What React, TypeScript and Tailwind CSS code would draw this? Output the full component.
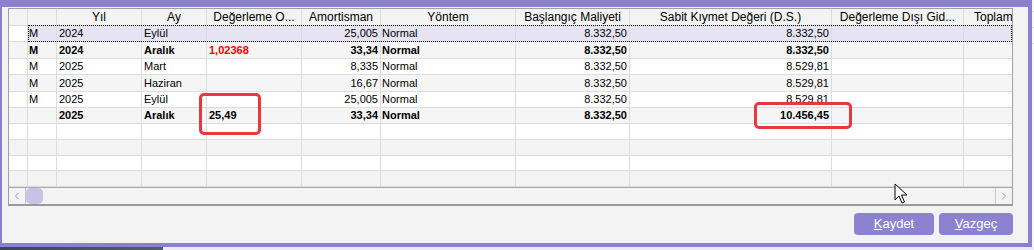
import { ChevronLeft, ChevronRight } from "lucide-react";

type Row = {
    m: string;
    yil: string;
    ay: string;
    deg: string;
    amort: string;
    yontem: string;
    bas: string;
    sabit: string;
    bold?: boolean;
    red?: boolean;
};

// Column widths in px (each includes its 1px right grid line)
const cols = [
    { key: "ind", title: "", w: "w-[19px]" },
    { key: "m", title: "", w: "w-[29px]" },
    { key: "yil", title: "Yıl", w: "w-[85px]" },
    { key: "ay", title: "Ay", w: "w-[65px]" },
    { key: "deg", title: "Değerleme O...", w: "w-[95px]" },
    { key: "amort", title: "Amortisman", w: "w-[79px]" },
    { key: "yontem", title: "Yöntem", w: "w-[135px]" },
    { key: "bas", title: "Başlangıç Maliyeti", w: "w-[114px]" },
    { key: "sabit", title: "Sabit Kıymet Değeri (D.S.)", w: "w-[202px]" },
    { key: "ddg", title: "Değerleme Dışı Gid...", w: "w-[132px]" },
    { key: "top", title: "Toplam", w: "w-[120px]" },
];

const rows: Row[] = [
    { m: "M", yil: "2024", ay: "Eylül", deg: "", amort: "25,005", yontem: "Normal", bas: "8.332,50", sabit: "8.332,50" },
    { m: "M", yil: "2024", ay: "Aralık", deg: "1,02368", amort: "33,34", yontem: "Normal", bas: "8.332,50", sabit: "8.332,50", bold: true, red: true },
    { m: "M", yil: "2025", ay: "Mart", deg: "", amort: "8,335", yontem: "Normal", bas: "8.332,50", sabit: "8.529,81" },
    { m: "M", yil: "2025", ay: "Haziran", deg: "", amort: "16,67", yontem: "Normal", bas: "8.332,50", sabit: "8.529,81" },
    { m: "M", yil: "2025", ay: "Eylül", deg: "", amort: "25,005", yontem: "Normal", bas: "8.332,50", sabit: "8.529,81" },
    { m: "", yil: "2025", ay: "Aralık", deg: "25,49", amort: "33,34", yontem: "Normal", bas: "8.332,50", sabit: "10.456,45", bold: true },
];

// row heights so grid lines land where the screenshot has them
const rowHeights = ["h-[16px]", "h-[17px]", "h-[16px]", "h-[17px]", "h-[16px]", "h-[16px]"];

const cell = "h-full shrink-0 border-r border-[#dcdcdc] flex items-center overflow-hidden whitespace-nowrap";

function DataRow({ row, index }: { row: Row; index: number }) {
    const selected = index === 0;
    const bg = selected ? "bg-[#e6e4f3]" : index % 2 === 1 ? "bg-[#f5f5f5]" : "bg-white";
    const weight = row.bold ? "font-bold" : "";
    return (
        <div className={`relative flex ${rowHeights[index]} border-b border-[#dcdcdc]`}>
            <div className={`${cell} w-[19px] ${selected ? "bg-white" : bg}`}></div>
            <div className={`${cell} w-[29px] ${bg} ${weight} pl-[1px]`}>{row.m}</div>
            <div className={`${cell} w-[85px] ${bg} ${weight} pl-[2px]`}>{row.yil}</div>
            <div className={`${cell} w-[65px] ${bg} ${weight} pl-[2px]`}>{row.ay}</div>
            <div className={`${cell} w-[95px] ${bg} ${weight} pl-[2px] ${row.red ? "text-[#ff0000]" : ""}`}>{row.deg}</div>
            <div className={`${cell} w-[79px] ${bg} ${weight} justify-end pr-[2px]`}>{row.amort}</div>
            <div className={`${cell} w-[135px] ${bg} ${weight} pl-[1px]`}>{row.yontem}</div>
            <div className={`${cell} w-[114px] ${bg} ${weight} justify-end pr-[2px]`}>{row.bas}</div>
            <div className={`${cell} w-[202px] ${bg} ${weight} justify-end pr-[2px]`}>{row.sabit}</div>
            <div className={`${cell} w-[132px] ${bg}`}></div>
            <div className={`${cell} w-[120px] ${bg}`}></div>
            {selected && (
                <div className="absolute left-[19px] right-0 top-[-1px] bottom-[-1px] border border-dotted border-black"></div>
            )}
        </div>
    );
}

function EmptyRow({ index }: { index: number }) {
    const bg = index % 2 === 1 ? "bg-[#f3f3f3]" : "bg-white";
    return (
        <div className="flex h-[16px] border-b border-[#dcdcdc]">
            {cols.map((c) => (
                <div key={c.key} className={`${cell} ${c.w} ${bg}`}></div>
            ))}
        </div>
    );
}

export default function App() {
    return (
        <div
            className="relative w-[1034px] h-[250px] overflow-hidden bg-[#f8f8fa] text-[11px] text-black"
            style={{ fontFamily: '"Liberation Sans", Tahoma, sans-serif' }}
        >
            <div className="flex h-[247px]">
                {/* Dialog window */}
                <div className="w-[1032px] h-[247px] shrink-0 border-l-2 border-t-[7px] border-r-4 border-b-4 border-[#8b80cc] bg-[#f3f3f3] pl-[6px] pr-[15px] pt-[1px] flex flex-col">
                    {/* Grid */}
                    <div className="h-[198px] border-l border-t border-r border-b-2 border-[#a0a0a0] border-b-[#9a9a9a] flex flex-col overflow-hidden">
                        {/* Header */}
                        <div className="flex h-[17px] shrink-0 border-b border-[#dcdcdc] bg-[#f3f3f3] text-[12px]">
                            {cols.map((c) => (
                                <div key={c.key} className={`${cell} ${c.w} justify-center`}>
                                    {c.key === "top" ? <span className="pl-[10px] self-center w-full">Toplam</span> : c.title}
                                </div>
                            ))}
                        </div>
                        {rows.map((r, i) => (
                            <DataRow key={i} row={r} index={i} />
                        ))}
                        {[6, 7, 8, 9].map((i) => (
                            <EmptyRow key={i} index={i} />
                        ))}
                        <div className="flex-1"></div>
                        {/* Horizontal scrollbar */}
                        <div className="flex h-[17px] shrink-0 border-t border-[#a9a9a9] bg-[#f3f3f3]">
                            <div className="w-[17px] h-full border-r border-[#c8c8c8] flex items-center justify-center text-[#7d74c4]">
                                <ChevronLeft size={12} strokeWidth={1.5} />
                            </div>
                            <div className="w-[17px] h-[16px] rounded-[5px] bg-[#c8c3e6]"></div>
                            <div className="flex-1"></div>
                            <div className="w-[17px] h-full border-l border-[#c8c8c8] flex items-center justify-center text-[#7d74c4]">
                                <ChevronRight size={12} strokeWidth={1.5} />
                            </div>
                        </div>
                    </div>
                    {/* Buttons */}
                    <div className="flex justify-end gap-[5px] mt-[7px] text-[13px]">
                        <button className="w-[80px] h-[22px] rounded-[4px] bg-[#8c82d0] text-white">
                            <span className="underline">K</span>aydet
                        </button>
                        <button className="w-[74px] h-[22px] rounded-[4px] bg-[#8c82d0] text-white">
                            <span className="underline">V</span>azgeç
                        </button>
                    </div>
                </div>
                {/* Background app to the right */}
                <div className="flex-1 flex flex-col bg-[#f7f7f7]">
                    <div className="h-[12px] border-b border-[#d8d8d8]"></div>
                    <div className="h-[16px] border-b border-[#d8d8d8]"></div>
                    <div className="h-[16px] border-b border-[#d8d8d8]"></div>
                </div>
            </div>
            {/* Background app below */}
            <div className="flex h-[3px]">
                <div className="w-[163px] bg-gradient-to-r from-[#3b4556] to-[#4d6070]"></div>
                <div className="flex-1 bg-[#eceaf4]"></div>
            </div>

            {/* Red highlight boxes */}
            <div className="absolute left-[199px] top-[93px] w-[62px] h-[42px] border-[3px] border-[#e8383d] rounded-[5px]"></div>
            <div className="absolute left-[754px] top-[102px] w-[98px] h-[27px] border-[3px] border-[#e8383d] rounded-[5px]"></div>

            {/* Mouse cursor */}
            <svg className="absolute left-[894px] top-[183px]" width="14" height="22" viewBox="0 0 14 22">
                <path d="M1 1 L1 17 L5 13 L8 20 L10.5 19 L7.5 12 L13 12 Z" fill="white" stroke="black" strokeWidth="1" strokeLinejoin="round" />
            </svg>
        </div>
    );
}
